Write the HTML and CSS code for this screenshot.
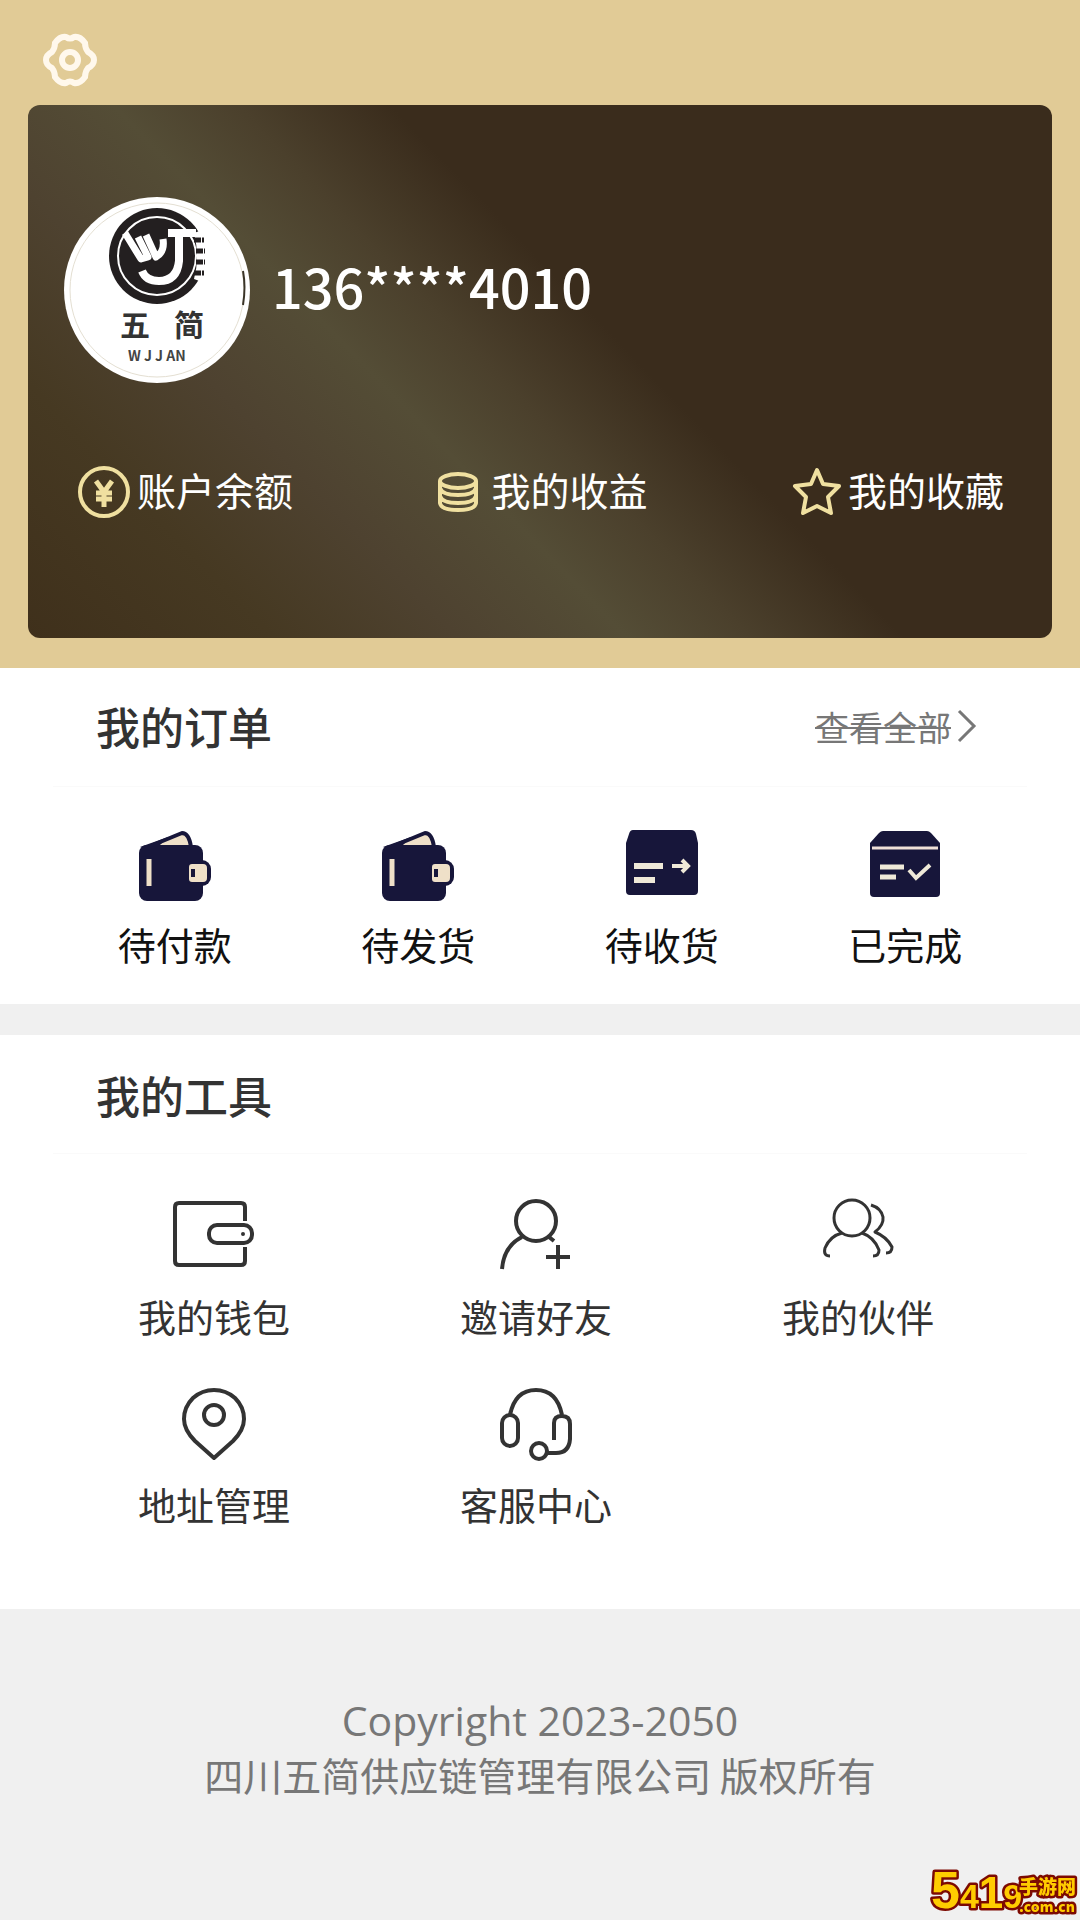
FILE: index.html
```
<!DOCTYPE html>
<html lang="zh-CN">
<head>
<meta charset="UTF-8">
<meta name="viewport" content="width=device-width, initial-scale=1.0">
<title>我的</title>
<link rel="stylesheet" href="styles.css">
</head>
<body>
<header class="header">
    <button class="setting" aria-label="设置">
        <svg viewBox="0 0 56 56" width="56" height="56">
            <path d="M13 11 Q18 4 24 5 Q28 8 32 5 Q38 4 43 11 Q43 16 46 20 Q52 23 52 28 Q52 33 46 36 Q43 40 43 45 Q38 52 32 51 Q28 48 24 51 Q18 52 13 45 Q13 40 10 36 Q4 33 4 28 Q4 23 10 20 Q13 16 13 11 Z"/>
            <circle cx="28" cy="28" r="8"/>
        </svg>
    </button>

    <div class="card">
        <div class="user">
            <svg class="avatar" viewBox="0 0 186 186" role="img" aria-label="五简">
                <circle cx="93" cy="93" r="93" fill="#fff"/>
                <circle cx="93" cy="93" r="87" fill="none" stroke="#e4dfd2" stroke-width="1"/>
                <path d="M179 74 Q182 90 179 108" fill="none" stroke="#3a3428" stroke-width="2"/>
                <circle cx="93" cy="59" r="48" fill="#231f20"/>
                <circle cx="93" cy="59" r="39" fill="none" stroke="#fff" stroke-width="2"/>
                <path d="M130 36 L146 30 L146 88 L130 82 Q136 60 130 36 Z" fill="#fff"/>
                <path d="M130 43 H140 M132 54 H141 M132 65 H141 M130 76 H140" stroke="#231f20" stroke-width="5" stroke-dasharray="7 1"/>
                <path d="M61 36 L77 62 L84 60 L74 40 M82 38 L92 60 Q101 55 99 42" fill="none" stroke="#fff" stroke-width="7" stroke-linejoin="round"/>
                <path d="M104 36 H132 M115 36 V64 Q113 84 95 84 Q82 84 78 74" fill="none" stroke="#fff" stroke-width="8"/>
                <text x="56" y="139" class="logo-name">五</text>
                <text x="110" y="139" class="logo-name">简</text>
                <text x="64" y="164" class="logo-sub">W J J AN</text>
            </svg>
            <span class="phone">136****4010</span>
        </div>
        <nav class="account">
            <a href="#" class="account-item">
                <svg viewBox="0 0 54 54" width="54" height="54">
                    <circle cx="27" cy="27" r="24"/>
                    <path d="M19 16 L27 27 L35 16 M27 27 V42 M19 28 H35 M19 34 H35" stroke-width="5"/>
                </svg>
                <span>账户余额</span>
            </a>
            <a href="#" class="account-item coins">
                <svg viewBox="0 0 42 42" width="42" height="42">
                    <ellipse cx="21" cy="10" rx="18" ry="7"/>
                    <path d="M3 10 V32 Q4 39 21 39 Q38 39 39 32 V10 M3 17 Q5 24 21 24 Q37 24 39 17 M3 25 Q5 32 21 32 Q37 32 39 25"/>
                </svg>
                <span>我的收益</span>
            </a>
            <a href="#" class="account-item">
                <svg viewBox="0 0 50 50" width="50" height="50">
                    <path d="M25 3 L31 17 L47 19 L36 30 L39 46 L25 39 L11 46 L14 30 L3 19 L19 17 Z"/>
                </svg>
                <span>我的收藏</span>
            </a>
        </nav>
    </div>
</header>

<section class="panel orders">
    <div class="panel-title">
        <h2>我的订单</h2>
        <a href="#" class="more"><span>查看全部</span><svg viewBox="0 0 20 34" width="20" height="34"><path d="M2 2 L17 17 L2 32"/></svg></a>
    </div>
    <nav class="order-list">
        <a href="#" class="order-item">
            <svg viewBox="0 0 74 74" width="74" height="74">
                <path d="M10 18 L44 4 Q51 4 53 18 Z" fill="#efe0c8" stroke="#17163a" stroke-width="4" stroke-linejoin="round"/>
                <path d="M2 18 L30 8 L18 20 Z" fill="#17163a"/>
                <rect x="1" y="16" width="64" height="56" rx="8" fill="#17163a"/>
                <rect x="48" y="31" width="25" height="26" rx="9" fill="#17163a"/>
                <path d="M54 35 H65 Q69 35 69 39 V49 Q69 53 65 53 H54 Q51 53 51 50 V38 Q51 35 54 35 Z" fill="#efe0c8"/>
                <path d="M55 40 V48" stroke="#17163a" stroke-width="4"/>
                <path d="M11 30 V57" stroke="#efe0c8" stroke-width="5"/>
            </svg>
            <span>待付款</span>
        </a>
        <a href="#" class="order-item">
            <svg viewBox="0 0 74 74" width="74" height="74">
                <path d="M10 18 L44 4 Q51 4 53 18 Z" fill="#efe0c8" stroke="#17163a" stroke-width="4" stroke-linejoin="round"/>
                <path d="M2 18 L30 8 L18 20 Z" fill="#17163a"/>
                <rect x="1" y="16" width="64" height="56" rx="8" fill="#17163a"/>
                <rect x="48" y="31" width="25" height="26" rx="9" fill="#17163a"/>
                <path d="M54 35 H65 Q69 35 69 39 V49 Q69 53 65 53 H54 Q51 53 51 50 V38 Q51 35 54 35 Z" fill="#efe0c8"/>
                <path d="M55 40 V48" stroke="#17163a" stroke-width="4"/>
                <path d="M11 30 V57" stroke="#efe0c8" stroke-width="5"/>
            </svg>
            <span>待发货</span>
        </a>
        <a href="#" class="order-item">
            <svg viewBox="0 0 74 74" width="74" height="74">
                <path d="M8 1 H66 Q70 1 71 5 L73 14 V62 Q73 66 69 66 H5 Q1 66 1 62 V14 L4 5 Q5 1 8 1 Z" fill="#17163a"/>
                <path d="M9 37 H38 M9 51 H30" stroke="#efe9d8" stroke-width="6"/>
                <path d="M47 37 H63 M57 31 L63 37 L57 43" fill="none" stroke="#efe9d8" stroke-width="4"/>
            </svg>
            <span>待收货</span>
        </a>
        <a href="#" class="order-item">
            <svg viewBox="0 0 74 74" width="74" height="74">
                <path d="M15 2 H59 Q61 2 63 4 L72 14 V64 Q72 68 68 68 H6 Q2 68 2 64 V14 L11 4 Q13 2 15 2 Z" fill="#17163a"/>
                <path d="M4 19 H70" stroke="#efe0d8" stroke-width="3"/>
                <path d="M12 38 H36 M12 48 H28" stroke="#efe9d8" stroke-width="5"/>
                <path d="M41 41 L48 49 L62 36" fill="none" stroke="#efe9d8" stroke-width="4"/>
            </svg>
            <span>已完成</span>
        </a>
    </nav>
</section>

<section class="panel tools">
    <div class="panel-title">
        <h2>我的工具</h2>
    </div>
    <nav class="tool-list">
        <a href="#" class="tool-item">
            <svg viewBox="0 0 82 76" width="82" height="76">
                <path d="M72 24 V10 Q72 6 68 6 H6 Q2 6 2 10 V64 Q2 68 6 68 H68 Q72 68 72 64 V50"/>
                <rect x="36" y="28" width="43" height="18" rx="8"/>
                <circle cx="70" cy="37" r="1" stroke-width="2"/>
            </svg>
            <span>我的钱包</span>
        </a>
        <a href="#" class="tool-item">
            <svg viewBox="0 0 82 76" width="82" height="76">
                <circle cx="41" cy="24" r="20"/>
                <path d="M7 72 Q9 49 27 40 M54 40 L59 44 M51 60 H75 M63 48 V72"/>
            </svg>
            <span>邀请好友</span>
        </a>
        <a href="#" class="tool-item thin">
            <svg viewBox="0 0 82 76" width="82" height="76">
                <circle cx="35" cy="21" r="18"/>
                <path d="M13 59 Q6 59 8 51 Q13 39 25 36 M45 36 Q57 40 62 53 Q62 59 56 59 M54 8 Q64 11 66 20 Q67 28 58 35 Q70 40 75 50 Q75 56 69 56"/>
            </svg>
            <span>我的伙伴</span>
        </a>
        <a href="#" class="tool-item">
            <svg viewBox="0 0 82 76" width="82" height="76">
                <path d="M41 73 L22 56 Q11 45 11 34 Q11 22 20 13 Q29 5 41 5 Q53 5 62 13 Q71 22 71 34 Q71 45 60 56 Z"/>
                <circle cx="41" cy="30" r="10"/>
            </svg>
            <span>地址管理</span>
        </a>
        <a href="#" class="tool-item">
            <svg viewBox="0 0 82 76" width="82" height="76">
                <path d="M15 30 Q20 5 41 5 Q62 5 67 30"/>
                <rect x="7" y="30" width="16" height="31" rx="8"/>
                <path d="M59 55 V38 Q59 31 67 31 Q75 31 75 39 V54 Q74 68 61 68 H52"/>
                <circle cx="44" cy="66" r="8"/>
            </svg>
            <span>客服中心</span>
        </a>
    </nav>
</section>

<footer class="footer">
    <p class="copyright">Copyright 2023-2050</p>
    <p>四川五简供应链管理有限公司 版权所有</p>
</footer>

<div class="mark">
    <svg viewBox="0 0 152 60" width="152" height="60">
        <text x="3" y="48" class="mark-num"><tspan class="mark-big">5</tspan><tspan>4</tspan><tspan class="mark-tall">1</tspan><tspan>9</tspan></text>
        <text x="91" y="34" class="mark-cn">手游网</text>
        <text x="91" y="52" class="mark-url">.com.cn</text>
    </svg>
</div>
</body>
</html>
```
FILE: styles.css
```
* {
    box-sizing: border-box;
}

body {
    margin: 0;
    min-height: 100vh;
    background-color: #f0f0f0;
    color: #333;
    font-family: "Noto Sans CJK SC", sans-serif;
    font-size: 38px;
}

a {
    color: inherit;
    text-decoration: none;
}

h2, p {
    margin: 0;
}

svg {
    display: block;
    flex: none;
}

.header {
    padding: 32px 28px 30px;
    background-color: #e1cb96;
}

.setting {
    display: block;
    margin: 0 0 17px 14px;
    padding: 0;
    border: none;
    background: none;
    cursor: pointer;
}

.setting svg {
    fill: none;
    stroke: #fff8ec;
    stroke-width: 6;
}

.card {
    padding: 92px 48px 118px 36px;
    border-radius: 12px;
    background: linear-gradient(46deg, #3f301b 0%, #463922 16%, #4e4230 28%, #544d36 39%, #4b402c 47%, #3a2c1c 57%, #3a2c1c 100%);
    color: #fff;
}

.user {
    display: flex;
    align-items: center;
    gap: 22px;
}

.avatar {
    width: 186px;
    height: 186px;
}

.logo-name {
    font-size: 30px;
    font-weight: bold;
    fill: #333;
}

.logo-sub {
    font-size: 14px;
    font-weight: bold;
    fill: #444;
}

.phone {
    padding-bottom: 10px;
    font-size: 54px;
    font-weight: 500;
}

.account {
    display: flex;
    justify-content: space-between;
    margin-top: 81px;
    padding-left: 13px;
}

.account-item {
    display: flex;
    align-items: center;
    gap: 6px;
    height: 56px;
    font-size: 39px;
}

.account-item span {
    padding-bottom: 6px;
}

.coins {
    gap: 12px;
}

.account-item svg {
    fill: none;
    stroke: #f0e0a0;
    stroke-width: 4;
    stroke-linejoin: round;
}

.panel {
    background-color: #fff;
}

.panel-title {
    display: flex;
    justify-content: space-between;
    align-items: center;
    height: 119px;
    margin: 0 53px;
    padding: 0 50px 2px 43px;
    border-bottom: 1px solid #fafafa;
}

.panel-title h2 {
    font-size: 44px;
    font-weight: 500;
}

.more {
    display: flex;
    align-items: center;
    gap: 6px;
    color: #777;
    font-size: 34px;
}

.more span {
    text-decoration: line-through;
    text-decoration-thickness: 2px;
}

.more svg {
    fill: none;
    stroke: #777;
    stroke-width: 3;
}

.order-list {
    display: grid;
    grid-template-columns: repeat(4, 1fr);
    padding: 42px 53px 32px;
}

.order-item {
    display: flex;
    flex-direction: column;
    align-items: center;
    gap: 13px;
    color: #111;
    line-height: 56px;
}

.tools {
    margin-top: 31px;
    padding-bottom: 64px;
}

.tools .panel-title {
    padding-top: 4px;
}

.tool-list {
    display: grid;
    grid-template-columns: repeat(3, 1fr);
    row-gap: 28px;
    padding: 43px 61px 0 53px;
}

.tool-item {
    display: flex;
    flex-direction: column;
    align-items: center;
    gap: 15px;
    height: 160px;
    line-height: 56px;
}

.tool-item svg {
    fill: none;
    stroke: #333;
    stroke-width: 4;
    stroke-linejoin: round;
}

.thin svg {
    stroke-width: 3;
}

.footer {
    padding: 84px 20px 110px;
    color: #777;
    font-size: 39px;
    line-height: 54px;
    text-align: center;
}

.copyright {
    font-family: "Open Sans", sans-serif;
    font-size: 41px;
}

/* 右下角站点标志 */
.mark {
    position: fixed;
    right: 0;
    bottom: 0;
}

.mark text {
    fill: #ffcc00;
    stroke: #7c0a02;
    stroke-width: 5;
    stroke-linejoin: round;
    paint-order: stroke;
    font-weight: 900;
}

.mark-num {
    font-family: "Liberation Sans", sans-serif;
    font-size: 34px;
}

.mark-big {
    font-size: 52px;
}

.mark-tall {
    font-size: 44px;
}

.mark-cn {
    font-size: 19px;
}

.mark-url {
    font-size: 14px;
}
```
